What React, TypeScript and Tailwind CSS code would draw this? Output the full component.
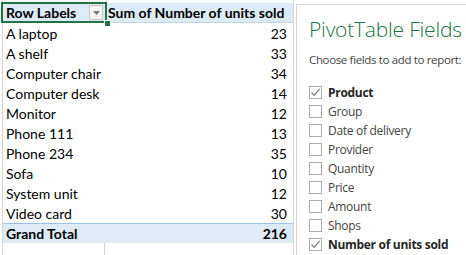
const rows: [string, number][] = [
  ['A laptop', 23],
  ['A shelf', 33],
  ['Computer chair', 34],
  ['Computer desk', 14],
  ['Monitor', 12],
  ['Phone 111', 13],
  ['Phone 234', 35],
  ['Sofa', 10],
  ['System unit', 12],
  ['Video card', 30],
];

const fields: [string, boolean][] = [
  ['Product', true],
  ['Group', false],
  ['Date of delivery', false],
  ['Provider', false],
  ['Quantity', false],
  ['Price', false],
  ['Amount', false],
  ['Shops', false],
  ['Number of units sold', true],
];

function Box({ checked }: { checked: boolean }) {
  return (
    <span className="w-[13px] h-[13px] border border-[#ababab] bg-white flex items-center justify-center shrink-0">
      {checked && (
        <svg width="11" height="11" viewBox="0 0 11 11">
          <path d="M1.5 5.5 L4.2 8.3 L9.5 2" fill="none" stroke="#7a7a7a" strokeWidth="1.2" />
        </svg>
      )}
    </span>
  );
}

export default function App() {
  return (
    <div className="w-[466px] h-[255px] bg-white flex overflow-hidden">
      {/* sheet */}
      <div className="w-[296px] shrink-0 font-['Lato',sans-serif] text-[14px] text-black">
        <div className="ml-[2px] w-[292px] h-full border-l border-r border-[#d4d4d4] flex flex-col">
          <div className="h-[3px] flex">
            <div className="w-[104px] border-r border-[#e1e1e1]" />
          </div>

          {/* header */}
          <div className="relative h-[20px] flex items-center bg-[#DDEBF7] border-b border-[#BDD7EE] font-bold">
            <div className="w-[104px] pl-[3px] flex items-center justify-between pr-[4px]">
              <span>Row Labels</span>
              <span className="w-[14px] h-[15px] border border-[#c6c6c6] bg-[#f4f4f4] flex items-center justify-center">
                <svg width="7" height="4" viewBox="0 0 7 4">
                  <path d="M0 0 H7 L3.5 4 Z" fill="#777" />
                </svg>
              </span>
            </div>
            <div className="flex-1 pl-[1px] whitespace-nowrap">Sum of Number of units sold</div>
            <div className="absolute left-[-2px] top-[-1px] w-[106px] h-[21px] border-2 border-[#217346]" />
            <div className="absolute left-[101px] top-[17px] w-[5px] h-[5px] bg-[#217346] border border-white box-content" />
          </div>

          {rows.map(([name, n]) => (
            <div key={name} className="h-[20px] flex items-center">
              <div className="w-[104px] pl-[3px]">{name}</div>
              <div className="flex-1 text-right pr-[6px]">{n}</div>
            </div>
          ))}

          <div className="h-[20px] flex items-center bg-[#DDEBF7] border-t border-[#9BC2E6] font-bold">
            <div className="w-[104px] pl-[3px]">Grand Total</div>
            <div className="flex-1 text-right pr-[6px]">216</div>
          </div>
          <div className="flex-1 flex">
            <div className="w-[102px] border-r border-[#d4d4d4]" />
          </div>
        </div>
      </div>

      {/* field list panel */}
      <div className="flex-1 mt-[4px] bg-white border-l border-t border-[#d4d4d4] pl-[12px] font-['Open_Sans',sans-serif] overflow-hidden whitespace-nowrap">
        <div className="mt-[10px] text-[21px] leading-[28px] font-light text-[#217346] tracking-[-0.2px]">PivotTable Fields</div>
        <div className="mt-[9px] text-[11.5px] leading-[16px] text-[#444] tracking-[-0.35px]">Choose fields to add to report:</div>
        <div className="mt-[15px] flex flex-col">
          {fields.map(([f, c]) => (
            <div key={f} className="h-[19px] flex items-center gap-[6px] text-[12px] text-[#444] tracking-[-0.3px]">
              <Box checked={c} />
              <span className={c ? 'font-bold text-[#262626]' : ''}>{f}</span>
            </div>
          ))}
        </div>
      </div>
    </div>
  );
}
